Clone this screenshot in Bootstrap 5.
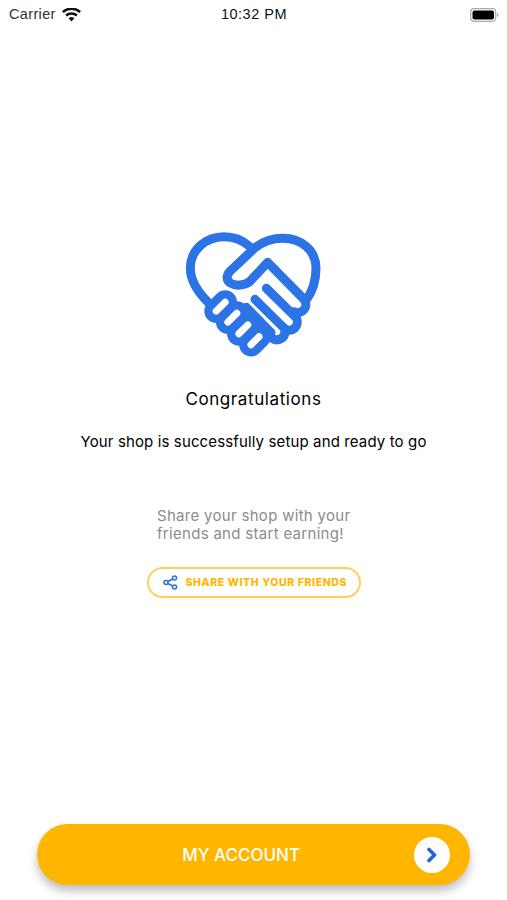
<!DOCTYPE html>
<html lang="en">
<head>
  <meta charset="UTF-8">
  <meta name="viewport" content="width=device-width, initial-scale=1.0">
  <title>Congratulations</title>
  <link href="https://cdn.jsdelivr.net/npm/bootstrap@5.3.0/dist/css/bootstrap.min.css" rel="stylesheet">
  <style>
    body { background: #fff; font-family: Inter, "Open Sans", sans-serif; color: #000; }
    .screen { height: 900px; overflow: hidden; }
    .status-bar { height: 28px; padding: 1px 8px 0 9px; font-family: "Liberation Sans", sans-serif; font-size: 14.5px; color: #333; letter-spacing: .35px; }
    .status-side { width: 100px; }
    .status-carrier { gap: 6px; }
    .status-time { font-weight: 500; color: #111; letter-spacing: .5px; }
    .heart-icon { display: block; width: 170px; height: 150px; margin-top: 192px; }
    .title-text { font-size: 17px; font-weight: 400; line-height: 24px; margin-top: 17px; letter-spacing: .6px; }
    .sub-text { font-size: 15px; line-height: 22px; margin-top: 20px; letter-spacing: .13px; }
    .share-text { width: 200px; margin: 54px 0 0 7px; color: #8c8c8c; font-size: 15px; line-height: 18px; letter-spacing: .3px; }
    .share-btn { width: 214px; height: 31px; margin-top: 24px; border: 2px solid #fdd05a; border-radius: 16px; background: #fff; padding: 0 0 0 14px; color: #ffb600; font-size: 10.5px; font-weight: 800; letter-spacing: .62px; }
    .account-btn { width: 433px; height: 61px; margin: 0 0 15px 37px; border: 0; border-radius: 31px; background: #ffb600; box-shadow: 0 6px 10px rgba(0,0,0,.25); color: #fff; font-size: 17px; font-weight: 500; padding: 0 20px 0 0; }
    .account-label { margin-right: 114px; padding-top: 3px; }
    .go-circle { width: 36px; height: 36px; border-radius: 50%; background: #fff; }
  </style>
</head>
<body>
  <div class="screen d-flex flex-column">
    <div class="status-bar d-flex align-items-center justify-content-between">
      <div class="status-side status-carrier d-flex align-items-center">
        <span>Carrier</span>
        <svg width="19" height="14" viewBox="0 0 19 14"><path d="M9.5 13.5 6.6 10.2a4.4 4.4 0 0 1 5.8 0zM4.9 8.4 3.2 6.5a9.6 9.6 0 0 1 12.6 0l-1.7 1.9a7 7 0 0 0-9.2 0zM1.7 4.9 0 3a14.4 14.4 0 0 1 19 0l-1.7 1.9a11.8 11.8 0 0 0-15.6 0z" fill="#111"/></svg>
      </div>
      <div class="status-time">10:32 PM</div>
      <div class="status-side d-flex justify-content-end">
        <svg width="29" height="14" viewBox="0 0 29 14"><rect x=".7" y=".7" width="25" height="12.6" rx="3.5" fill="none" stroke="#aaa" stroke-width="1.2"/><rect x="2.5" y="2.5" width="21.5" height="9" rx="2" fill="#000"/><path d="M27 5v4a2 2 0 0 0 1.4-2A2 2 0 0 0 27 5z" fill="#aaa"/></svg>
      </div>
    </div>
    <div class="flex-grow-1 d-flex flex-column align-items-center text-center">
      <svg class="heart-icon" viewBox="0 0 510 450" fill="none" stroke="#2c74e6" stroke-width="27" stroke-linecap="round" stroke-linejoin="round">
        <path d="M118 248C85 215 64 180 64 145 64 90 110 50 165 50c30 0 55 10 75 28"/>
        <path d="M412 240c20-28 29-60 29-95 0-55-45-90-100-90-32 0-60 10-85 30l-72 68c-14 14-12 28 0 36 16 10 42 8 58-4l54-58 108 110c18 22-4 50-30 38"/>
        <path d="M292 205l90 88c12 26-14 48-36 32"/>
        <path d="M258 238l88 87c8 26-16 44-40 28"/>
        <path d="M232 262l74 76"/>
        <g stroke-width="25">
          <rect x="-42" y="-23" width="84" height="46" rx="23" transform="translate(155 260) rotate(-45)"/>
          <rect x="-42" y="-23" width="84" height="46" rx="23" transform="translate(190 293) rotate(-45)"/>
          <rect x="-42" y="-23" width="84" height="46" rx="23" transform="translate(223 328) rotate(-45)"/>
          <rect x="-40" y="-23" width="80" height="46" rx="23" transform="translate(258 362) rotate(-45)"/>
        </g>
      </svg>
      <div class="title-text">Congratulations</div>
      <div class="sub-text">Your shop is successfully setup and ready to go</div>
      <div class="share-text text-start">Share your shop with your friends and start earning!</div>
      <button type="button" class="share-btn d-flex align-items-center gap-2">
        <svg width="15" height="15" viewBox="0 0 15 15" fill="none" stroke="#2c6fdc" stroke-width="1.5"><circle cx="11.5" cy="3" r="2"/><circle cx="3" cy="7.5" r="2"/><circle cx="11.5" cy="12" r="2"/><path d="M4.8 6.5 9.7 4M4.8 8.5 9.7 11"/></svg>
        <span>SHARE WITH YOUR FRIENDS</span>
      </button>
    </div>
    <button type="button" class="account-btn d-flex align-items-center justify-content-end">
      <span class="account-label">MY ACCOUNT</span>
      <span class="go-circle d-flex align-items-center justify-content-center">
        <svg width="12" height="16" viewBox="0 0 12 16" fill="none" stroke="#2563d8" stroke-width="3.6" stroke-linecap="round" stroke-linejoin="round"><path d="M3 2.5l5.5 5.5-5.5 5.5"/></svg>
      </span>
    </button>
  </div>
  <script src="https://cdn.jsdelivr.net/npm/bootstrap@5.3.0/dist/js/bootstrap.bundle.min.js"></script>
</body>
</html>
